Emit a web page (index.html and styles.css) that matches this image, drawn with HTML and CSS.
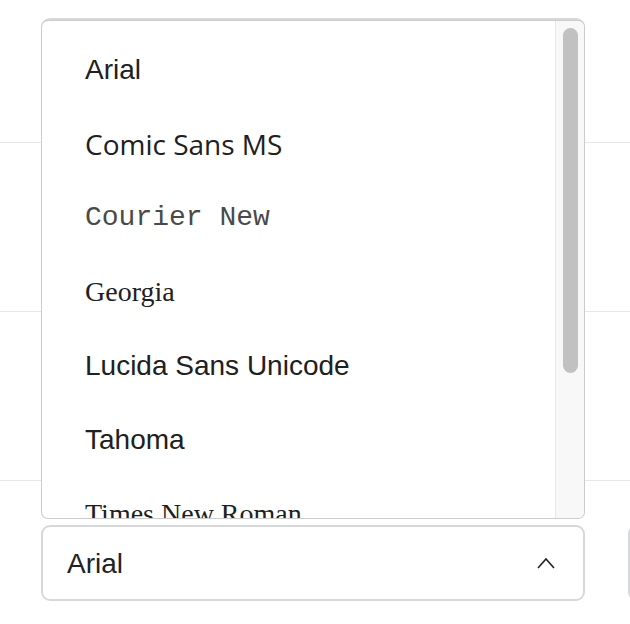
FILE: index.html
```html
<!DOCTYPE html>
<html lang="en">
<head>
  <meta charset="UTF-8" />
  <meta name="viewport" content="width=device-width, initial-scale=1.0" />
  <title>Font Settings</title>
  <link rel="stylesheet" href="styles.css">
</head>
<body>
  <div class="settings">
    <div class="row">
      <div class="picker"></div>
    </div>
    <div class="row">
      <div class="picker"></div>
    </div>
    <div class="row">
      <div class="picker"></div>
    </div>
    <div class="row">
      <div class="picker picker-open">
        <span class="picker-value">Arial</span>
        <svg class="chevron" width="18" height="12" viewBox="0 0 18 12">
          <polyline points="1,11 9,2 17,11" fill="none" stroke="#222" stroke-width="1.6" />
        </svg>

        <!-- open option list, sits above the picker -->
        <div class="dropdown">
          <ul class="options">
            <li class="opt opt-arial">Arial</li>
            <li class="opt opt-comic">Comic Sans MS</li>
            <li class="opt opt-courier">Courier New</li>
            <li class="opt opt-georgia">Georgia</li>
            <li class="opt opt-lucida">Lucida Sans Unicode</li>
            <li class="opt opt-tahoma">Tahoma</li>
            <li class="opt opt-times">Times New Roman</li>
          </ul>
          <div class="scrollbar">
            <div class="thumb"></div>
          </div>
        </div>
      </div>
      <div class="picker picker-side"></div>
    </div>
  </div>
</body>
</html>
```

FILE: styles.css
```css
body {
  margin: 0;
  background: #fff;
  font-family: "Liberation Sans", Arial, sans-serif;
  color: #222;
  overflow: hidden;
}

.settings {
  margin-top: -26px;
}

.row {
  display: flex;
  gap: 43px;
  height: 169px;
  box-sizing: border-box;
  padding: 44px 0 0 41px;
  border-bottom: 1px solid #e5e7eb;
  overflow: hidden;
}

.row:last-child {
  border-bottom: none;
  overflow: visible;
}

.picker {
  position: relative;
  display: flex;
  align-items: center;
  justify-content: space-between;
  width: 544px;
  height: 76px;
  box-sizing: border-box;
  padding: 0 28px 0 24px;
  border: 2px solid #d6d8dc;
  border-radius: 9px;
  background: #fff;
  flex-shrink: 0;
}

.picker-value {
  font-size: 28px;
  line-height: 1;
  margin-top: 2px;
}

.picker-side {
  width: 3px;
  border-right: none;
  border-radius: 9px 0 0 9px;
}

.chevron {
  display: block;
}

/* popup list */
.dropdown {
  position: absolute;
  left: -2px;
  bottom: calc(100% + 8px);
  width: 544px;
  height: 499px;
  box-sizing: border-box;
  display: flex;
  border: 1px solid rgba(0, 0, 0, 0.2);
  border-radius: 7px;
  background: #fff;
  overflow: hidden;
}

.options {
  flex: 1;
  list-style: none;
  margin: 0;
  padding: 12px 0 0 43px;
  overflow: hidden;
}

.opt {
  height: 74px;
  line-height: 74px;
  font-size: 28px;
  color: #202020;
  white-space: nowrap;
}

.opt-arial { font-family: "Liberation Sans", Arial, sans-serif; }
.opt-comic { font-family: "Comic Sans MS", "Open Sans", sans-serif; }
.opt-courier { font-family: "Liberation Mono", "Courier New", monospace; color: #4a4a4a; }
.opt-georgia { font-family: Georgia, "Liberation Serif", serif; }
.opt-lucida { font-family: "Lucida Sans Unicode", "Liberation Sans", sans-serif; }
.opt-tahoma { font-family: Tahoma, "Liberation Sans", sans-serif; }
.opt-times { font-family: "Liberation Serif", "Times New Roman", serif; }

.scrollbar {
  width: 29px;
  box-sizing: border-box;
  padding: 7px 6px 0 7px;
  border-left: 1px solid #e8e8e8;
  background: #f8f8f8;
}

.thumb {
  height: 345px;
  border-radius: 8px;
  background: #c1c1c1;
}
```
